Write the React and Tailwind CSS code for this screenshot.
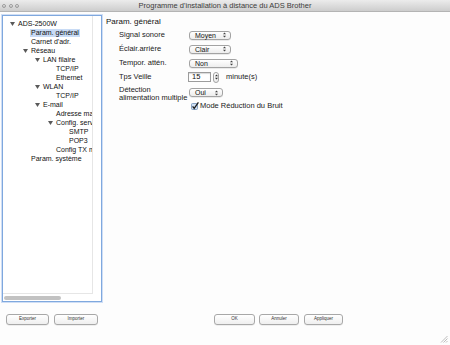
import React from 'react';

const treeItems = [
  { level: 0, text: 'ADS-2500W', open: true },
  { level: 1, text: 'Param. général', selected: true },
  { level: 1, text: "Carnet d'adr." },
  { level: 1, text: 'Réseau', open: true },
  { level: 2, text: 'LAN filaire', open: true },
  { level: 3, text: 'TCP/IP' },
  { level: 3, text: 'Ethernet' },
  { level: 2, text: 'WLAN', open: true },
  { level: 3, text: 'TCP/IP' },
  { level: 2, text: 'E-mail', open: true },
  { level: 3, text: 'Adresse mail' },
  { level: 3, text: 'Config. serveur', open: true },
  { level: 4, text: 'SMTP' },
  { level: 4, text: 'POP3' },
  { level: 3, text: 'Config TX mail' },
  { level: 1, text: 'Param. système' },
];

// text x positions per tree level (relative to list inner edge)
const levelPad = ['pl-[15px]', 'pl-[28px]', 'pl-[40px]', 'pl-[53px]', 'pl-[66px]'];

function Triangle() {
  return (
    <svg width="5" height="4" viewBox="0 0 5 4" className="shrink-0">
      <path d="M0 0 H5 L2.5 4 Z" fill="#5a5a5a" />
    </svg>
  );
}

function UpDown({ color = '#444' }) {
  return (
    <svg width="3" height="6" viewBox="0 0 3 6" className="shrink-0">
      <path d="M0 2.3 L1.5 0.5 L3 2.3 Z" fill={color} />
      <path d="M0 3.7 L1.5 5.5 L3 3.7 Z" fill={color} />
    </svg>
  );
}

function Select({ value, width }) {
  return (
    <div
      className={`${width} h-[9px] flex items-center justify-between pl-[5px] pr-[4px] rounded-[3px] border border-[#a3a3a3] bg-gradient-to-b from-white to-[#ededed] shadow-[0_0.5px_0.5px_rgba(0,0,0,0.15)] text-[7px] text-[#111]`}
    >
      <span className="leading-none">{value}</span>
      <UpDown />
    </div>
  );
}

function Button({ label, width }) {
  return (
    <div
      className={`${width} h-[11px] flex items-center justify-center rounded-[3px] border border-[#a8a8a8] bg-gradient-to-b from-white to-[#efefef] shadow-[0_0.5px_0.5px_rgba(0,0,0,0.12)] text-[4.5px] text-[#333]`}
    >
      {label}
    </div>
  );
}

function Row({ label, children }) {
  return (
    <div className="h-[14px] flex items-center">
      <div className="w-[83px] pl-[13px] text-[7.5px] text-[#1a1a1a] leading-none">{label}</div>
      {children}
    </div>
  );
}

export default function App() {
  return (
    <div
      className="relative w-[450px] h-[345px] flex flex-col bg-[#fdfdfd] overflow-hidden"
      style={{ fontFamily: '"Liberation Sans", Arial, sans-serif' }}
    >
      {/* title bar */}
      <div className="h-[12px] flex items-center bg-gradient-to-b from-[#ececec] to-[#cdcdcd] border-b border-[#b4b4b4]">
        <div className="w-[40px] flex items-center gap-[2.5px] pl-[2px]">
          {[0, 1, 2].map((i) => (
            <span
              key={i}
              className="w-[4px] h-[4px] rounded-full bg-gradient-to-b from-[#f4f4f4] to-[#c4c4c4] border border-[#9b9b9b]"
            />
          ))}
        </div>
        <div className="flex-1 text-center text-[7.5px] text-[#3c3c3c] leading-none">
          Programme d'installation à distance du ADS Brother
        </div>
        <div className="w-[40px]" />
      </div>

      {/* body */}
      <div className="h-[290px] flex pt-[3px]">
        {/* tree panel */}
        <div className="ml-[2px] w-[100px] h-[287px] flex flex-col border border-[#7fa8de] shadow-[0_0_0_1px_rgba(150,185,235,0.45)] bg-white">
          <div className="flex-1 flex min-h-0">
            <div className="w-[90px] pt-[3px] overflow-hidden border-r border-[#e6e6e6] border-b">
              {treeItems.map((it, i) => (
                <div
                  key={i}
                  className={`h-[9px] flex items-center whitespace-nowrap text-[7px] text-[#111] ${levelPad[it.level]}`}
                >
                  {it.open && (
                    <span className="w-[9px] -ml-[9px] shrink-0 flex justify-start pl-[1px]">
                      <Triangle />
                    </span>
                  )}
                  <span
                    className={`shrink-0 leading-[8px] ${it.selected ? 'bg-[#c8dbf5] px-[1px] -ml-[1px]' : ''}`}
                  >
                    {it.text}
                  </span>
                </div>
              ))}
            </div>
            <div className="flex-1" />
          </div>
          <div className="h-[7px] flex items-center pl-[1px]">
            <div className="w-[57px] h-[4px] rounded-full bg-[#c2c2c2]" />
          </div>
        </div>

        {/* settings */}
        <div className="ml-[4px] flex-1 flex flex-col">
          <div className="h-[13px] flex items-center text-[8px] text-[#111] leading-none">Param. général</div>
          <Row label="Signal sonore">
            <Select value="Moyen" width="w-[42px]" />
          </Row>
          <Row label="Éclair.arrière">
            <Select value="Clair" width="w-[42px]" />
          </Row>
          <Row label="Tempor. attén.">
            <Select value="Non" width="w-[49px]" />
          </Row>
          <Row label="Tps Veille">
            <div className="-ml-[1px] w-[23px] h-[10px] flex items-center pl-[3px] border border-[#9c9c9c] bg-white shadow-[inset_0_1px_1px_rgba(0,0,0,0.15)] text-[7.5px] text-[#111] leading-none">
              15
            </div>
            <div className="ml-[2px] w-[6px] h-[11px] flex items-center justify-center rounded-full border border-[#a3a3a3] bg-gradient-to-b from-white to-[#ececec]">
              <UpDown color="#333" />
            </div>
            <div className="ml-[7px] text-[7.5px] text-[#1a1a1a] leading-none">minute(s)</div>
          </Row>
          <div className="h-[18px] flex">
            <div className="w-[83px] pl-[13px] pt-[2px] text-[7.5px] text-[#1a1a1a] leading-[8px]">
              Détection
              <br />
              alimentation multiple
            </div>
            <div className="pt-[4px]">
              <Select value="Oui" width="w-[34px]" />
            </div>
          </div>
          <div className="h-[8px] flex items-center pl-[85px]">
            <svg width="8" height="8" viewBox="0 0 8 8" className="shrink-0 -mt-[1px]">
              <rect x="0.5" y="1.5" width="6" height="6" rx="1" fill="#cfe0f4" stroke="#6f8fb8" strokeWidth="0.8" />
              <path d="M1.6 4.4 L3.2 6.4 L7.4 0.4" fill="none" stroke="#1b1b1b" strokeWidth="1.3" />
            </svg>
            <span className="ml-[1px] text-[7.5px] text-[#1a1a1a] leading-none">Mode Réduction du Bruit</span>
          </div>
        </div>
      </div>

      {/* footer buttons */}
      <div className="pt-[12px] flex items-center">
        <div className="ml-[6px]">
          <Button label="Exporter" width="w-[43px]" />
        </div>
        <div className="ml-[5px]">
          <Button label="Importer" width="w-[44px]" />
        </div>
        <div className="ml-[116px]">
          <Button label="OK" width="w-[41px]" />
        </div>
        <div className="ml-[4px]">
          <Button label="Annuler" width="w-[40px]" />
        </div>
        <div className="ml-[5px]">
          <Button label="Appliquer" width="w-[39px]" />
        </div>
      </div>

      {/* resize grip */}
      <svg width="8" height="8" viewBox="0 0 8 8" className="absolute right-[2px] bottom-[2px]">
        <path d="M7.5 1 L1 7.5 M7.5 3.5 L3.5 7.5 M7.5 6 L6 7.5" stroke="#a0a0a0" strokeWidth="0.7" />
      </svg>
    </div>
  );
}
